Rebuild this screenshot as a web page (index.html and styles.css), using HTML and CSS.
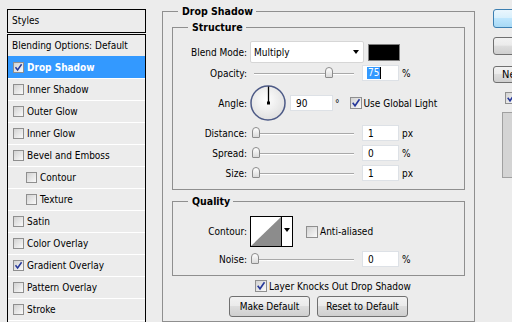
FILE: index.html
```html
<!DOCTYPE html>
<html>
<head>
<meta charset="utf-8">
<title>Layer Style</title>
<link rel="stylesheet" href="styles.css">
</head>
<body>
<div class="dialog">
  <div class="styles-panel">
    <div class="styles-head">Styles</div>
    <ul class="style-list">
      <li class="style-item first">Blending Options: Default</li>
      <li class="style-item selected"><span class="cb"><svg width="9" height="9" viewBox="0 0 9 9"><path d="M1.5 4.2 L3.6 7 L7.6 1.2" fill="none" stroke="#26389a" stroke-width="1.5"/></svg></span>Drop Shadow</li>
      <li class="style-item"><span class="cb"></span>Inner Shadow</li>
      <li class="style-item"><span class="cb"></span>Outer Glow</li>
      <li class="style-item"><span class="cb"></span>Inner Glow</li>
      <li class="style-item"><span class="cb"></span>Bevel and Emboss</li>
      <li class="style-item sub"><span class="cb"></span>Contour</li>
      <li class="style-item sub"><span class="cb"></span>Texture</li>
      <li class="style-item"><span class="cb"></span>Satin</li>
      <li class="style-item"><span class="cb"></span>Color Overlay</li>
      <li class="style-item"><span class="cb"><svg width="9" height="9" viewBox="0 0 9 9"><path d="M1.5 4.2 L3.6 7 L7.6 1.2" fill="none" stroke="#26389a" stroke-width="1.5"/></svg></span>Gradient Overlay</li>
      <li class="style-item"><span class="cb"></span>Pattern Overlay</li>
      <li class="style-item"><span class="cb"></span>Stroke</li>
      <li class="style-item"></li>
    </ul>
  </div>

  <fieldset class="group outer">
    <legend>Drop Shadow</legend>
    <fieldset class="group structure">
      <legend>Structure</legend>
      <div class="row r-blend">
        <span class="lbl">Blend Mode:</span>
        <div class="select"><span>Multiply</span><span class="arrow"></span></div>
        <span class="swatch"></span>
      </div>
      <div class="row r-opacity">
        <span class="lbl">Opacity:</span>
        <div class="slider"><span class="track"></span><span class="thumb" style="left:74px"></span></div>
        <div class="field f-opacity"><span class="sel">75</span><span class="caret"></span></div>
        <span class="unit">%</span>
      </div>
      <div class="row r-angle">
        <span class="lbl">Angle:</span>
        <svg class="dial" width="36" height="36" viewBox="0 0 36 36">
          <defs>
            <radialGradient id="dg" cx="45%" cy="40%" r="60%">
              <stop offset="0" stop-color="#ffffff"/>
              <stop offset="1" stop-color="#e0e0e0"/>
            </radialGradient>
          </defs>
          <circle cx="18" cy="18" r="17" fill="url(#dg)" stroke="#4d5a86" stroke-width="1.5"/>
          <line x1="18.5" y1="18" x2="18.5" y2="1.5" stroke="#000" stroke-width="1.3"/>
          <rect x="17" y="16.5" width="3" height="3" fill="#000"/>
        </svg>
        <div class="field f-angle">90</div>
        <span class="deg">°</span>
        <span class="cb lg gl-cb"><svg width="10" height="10" viewBox="0 0 10 10"><path d="M1.7 4.8 L4 7.8 L8.5 1.3" fill="none" stroke="#26389a" stroke-width="1.6"/></svg></span>
        <span class="gl-text">Use Global Light</span>
      </div>
      <div class="row r-slide">
        <span class="lbl">Distance:</span>
        <div class="slider"><span class="track"></span><span class="thumb" style="left:1px"></span></div>
        <div class="field">1</div>
        <span class="unit">px</span>
      </div>
      <div class="row r-slide">
        <span class="lbl">Spread:</span>
        <div class="slider"><span class="track"></span><span class="thumb" style="left:1px"></span></div>
        <div class="field">0</div>
        <span class="unit">%</span>
      </div>
      <div class="row r-slide">
        <span class="lbl">Size:</span>
        <div class="slider"><span class="track"></span><span class="thumb" style="left:1px"></span></div>
        <div class="field">1</div>
        <span class="unit">px</span>
      </div>
    </fieldset>

    <fieldset class="group quality">
      <legend>Quality</legend>
      <div class="row r-contour">
        <span class="lbl">Contour:</span>
        <div class="contour">
          <svg width="30" height="29" viewBox="0 0 30 29"><rect width="30" height="29" fill="#fff"/><polygon points="0,29 30,0 30,29" fill="#8c8c8c"/></svg>
          <span class="c-drop"><span class="arrow"></span></span>
        </div>
        <span class="cb lg aa-cb"></span>
        <span class="aa-text">Anti-aliased</span>
      </div>
      <div class="row r-slide r-noise">
        <span class="lbl">Noise:</span>
        <div class="slider"><span class="track"></span><span class="thumb" style="left:0px"></span></div>
        <div class="field">0</div>
        <span class="unit">%</span>
      </div>
    </fieldset>

    <div class="row r-knock">
      <span class="cb lg"><svg width="10" height="10" viewBox="0 0 10 10"><path d="M1.7 4.8 L4 7.8 L8.5 1.3" fill="none" stroke="#26389a" stroke-width="1.6"/></svg></span>
      <span class="knock-text">Layer Knocks Out Drop Shadow</span>
    </div>
    <div class="btns">
      <button class="btn b-make">Make Default</button>
      <button class="btn b-reset">Reset to Default</button>
    </div>
  </fieldset>

  <div class="side">
    <button class="btn b-ok">OK</button>
    <button class="btn b-cancel">Cancel</button>
    <button class="btn b-new">New Style...</button>
    <span class="cb lg pv-cb"><svg width="10" height="10" viewBox="0 0 10 10"><path d="M1.7 4.8 L4 7.8 L8.5 1.3" fill="none" stroke="#26389a" stroke-width="1.6"/></svg></span>
    <div class="preview"></div>
  </div>
</div>
</body>
</html>
```

FILE: styles.css
```css
* { box-sizing: border-box; }
html, body { margin: 0; padding: 0; }
body {
  width: 512px;
  height: 322px;
  overflow: hidden;
  background: #ececec;
  color: #000;
  font-family: "DejaVu Sans Condensed", "Liberation Sans", sans-serif;
  font-size: 10px;
  line-height: 13px;
}
.dialog { display: flex; align-items: flex-start; }

/* styles list */
.styles-panel { flex: none; width: 139px; margin: 9px 0 0 7px; }
.styles-head { height: 24px; border: 1px solid #000; padding-left: 4px; line-height: 22px; }
.style-list { list-style: none; margin: 1px 0 0; padding: 0; border: 1px solid #000; border-bottom: 0; }
.style-item { display: flex; align-items: center; height: 22px; border-top: 1px solid #fff; padding-left: 5px; white-space: nowrap; }
.style-item.first { height: 21px; border-top: 0; padding-left: 4px; }
.style-item.sub { padding-left: 18px; }
.style-item.selected { background: #3399ff; border-top-color: #3399ff; color: #fff; font-weight: bold; }
.style-item .cb { margin-right: 3px; }

/* checkbox */
.cb {
  flex: none;
  display: inline-flex;
  align-items: center;
  justify-content: center;
  width: 11px;
  height: 11px;
  border: 1px solid #8f8f8f;
  background: linear-gradient(135deg, #d2d2d2, #fafafa);
}
.cb svg { display: block; }
.cb.lg { width: 12px; height: 12px; }

/* group boxes */
.group { margin: 0; padding: 0; border: 1px solid #8f8f8f; min-width: 0; }
.group > legend { padding: 0 3px 0 4px; margin-left: 15px; font-weight: bold; font-size: 10.5px; line-height: 13px; }
.outer { flex: none; width: 313px; margin: 5px 0 0 16px; padding: 3px 9px 4px; }
.outer > legend { margin-left: 6px; }
.structure { padding: 7px 0 6px; }
.quality { margin-top: 5px; padding: 8px 0 6px; }

/* rows */
.row { display: flex; align-items: center; white-space: nowrap; }
.lbl { flex: none; width: 74px; text-align: right; }
.r-blend { height: 22px; }
.r-opacity { height: 20px; }
.r-angle { height: 40px; }
.r-slide { height: 20px; }

.select {
  flex: none;
  margin-left: 3px;
  width: 114px;
  height: 22px;
  display: flex;
  align-items: center;
  justify-content: space-between;
  padding: 0 4px 0 3px;
  background: #fff;
  border: 1px solid #d6d6d6;
  border-radius: 2px;
}
.arrow { width: 0; height: 0; border-left: 3px solid transparent; border-right: 3px solid transparent; border-top: 4px solid #000; }
.swatch { flex: none; margin-left: 4px; width: 32px; height: 17px; background: #000; border: 1px solid #7f7f7f; }

.slider { position: relative; flex: none; margin-left: 4px; width: 103px; height: 12px; }
.track { position: absolute; left: 3px; right: 0; top: 6px; height: 2px; border-top: 1px solid #a9a9a9; background: #fff; }
.thumb {
  position: absolute;
  top: 0;
  width: 8px;
  height: 11px;
  border: 1px solid #8c8c8c;
  border-radius: 4px 4px 1px 1px;
  background: linear-gradient(#ffffff, #dadada);
}

.field {
  flex: none;
  margin-left: 8px;
  width: 37px;
  height: 16px;
  display: flex;
  align-items: center;
  padding-left: 5px;
  background: #fff;
  border: 1px solid #dde1e6;
}
.f-opacity { padding-left: 4px; }
.sel { background: #3399ff; color: #fff; padding: 0 1px; line-height: 12px; }
.caret { width: 1px; height: 12px; background: #000; }
.unit { margin-left: 3px; }

.dial { flex: none; display: block; margin-left: 3px; }
.f-angle { margin-left: 4px; width: 43px; }
.deg { margin-left: 2px; }
.gl-cb { margin-left: 10px; }
.gl-text { margin-left: 2px; }

.r-contour { height: 31px; }
.contour { flex: none; margin-left: 3px; display: flex; width: 43px; height: 31px; border: 1px solid #000; background: #fff; }
.contour svg { display: block; }
.c-drop { flex: 1; display: flex; align-items: center; justify-content: center; border-left: 1px solid #000; padding-bottom: 3px; }
.aa-cb { margin-left: 13px; }
.aa-text { margin-left: 2px; }
.r-noise { margin-top: 2px; }

.r-knock { height: 20px; padding-left: 83px; }
.knock-text { margin-left: 2px; }
.btns { display: flex; gap: 7px; padding-left: 57px; height: 21px; }

.btn {
  flex: none;
  height: 21px;
  margin: 0;
  padding: 0;
  display: flex;
  align-items: center;
  justify-content: center;
  font: inherit;
  color: #000;
  border: 1px solid #707070;
  border-radius: 3px;
  background: linear-gradient(#f2f2f2, #ebebeb 45%, #dddddd 50%, #cfcfcf);
}
.b-make { width: 81px; }
.b-reset { width: 91px; }

.side { flex: none; width: 80px; margin: 9px 0 0 18px; display: flex; flex-direction: column; }
.b-ok { width: 80px; height: 19px; border-color: #3c7fb1; background: linear-gradient(#eaf6fd, #d9f0fc 45%, #bee6fd 50%, #a7d9f5); }
.b-cancel { width: 80px; height: 18px; margin-top: 9px; }
.b-new { width: 80px; height: 17px; margin-top: 11px; justify-content: flex-start; padding-left: 8px; font-size: 11px; }
.pv-cb { margin: 9px 0 0 12px; }
.preview { margin: 8px 0 0 9px; height: 66px; background: #d4d4d4; border: 1px solid #a0a0a0; }
```
